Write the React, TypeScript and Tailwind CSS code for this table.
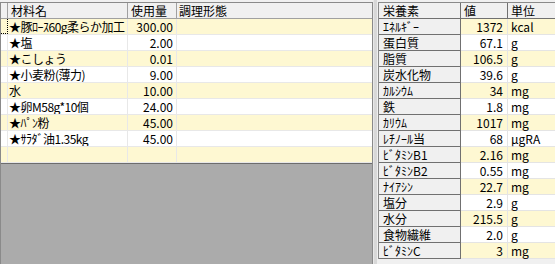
const ingredients = [
  { name: "★豚ﾛｰｽ60g柔らか加工", qty: "300.00" },
  { name: "★塩", qty: "2.00" },
  { name: "★こしょう", qty: "0.01" },
  { name: "★小麦粉(薄力)", qty: "9.00" },
  { name: "水", qty: "10.00" },
  { name: "★卵M58g*10個", qty: "24.00" },
  { name: "★ﾊﾟﾝ粉", qty: "45.00" },
  { name: "★ｻﾗﾀﾞ油1.35kg", qty: "45.00" },
  { name: "", qty: "" },
];

const nutrients = [
  ["ｴﾈﾙｷﾞｰ", "1372", "kcal"],
  ["蛋白質", "67.1", "g"],
  ["脂質", "106.5", "g"],
  ["炭水化物", "39.6", "g"],
  ["ｶﾙｼｳﾑ", "34", "mg"],
  ["鉄", "1.8", "mg"],
  ["ｶﾘｳﾑ", "1017", "mg"],
  ["ﾚﾁﾉｰﾙ当", "68", "μgRA"],
  ["ﾋﾞﾀﾐﾝB1", "2.16", "mg"],
  ["ﾋﾞﾀﾐﾝB2", "0.55", "mg"],
  ["ﾅｲｱｼﾝ", "22.7", "mg"],
  ["塩分", "2.9", "g"],
  ["水分", "215.5", "g"],
  ["食物繊維", "2.0", "g"],
  ["ﾋﾞﾀﾐﾝC", "3", "mg"],
];

export default function App() {
  return (
    <div className="flex w-[555px] h-[264px] overflow-hidden bg-[#f0f0f0] text-[12px] leading-[16px] text-black font-['Noto_Sans_CJK_JP',sans-serif]">
      {/* ingredient grid */}
      <div className="w-[373px] pt-[2px] flex flex-col">
        <div className="flex-1 flex flex-col border-t border-l border-r border-[#8a8a8a] bg-[#ababab]">
          <div className="flex h-[16px] bg-[#f0f0f0] border-b border-[#a0a0a0]">
            <div className="w-[7px] border-r border-[#a0a0a0]" />
            <div className="w-[120px] pl-[3px] border-r border-[#a0a0a0]">材料名</div>
            <div className="w-[49px] pl-[3px] border-r border-[#a0a0a0]">使用量</div>
            <div className="flex-1 pl-[2px]">調理形態</div>
          </div>
          {ingredients.map((r, i) => (
            <div
              key={i}
              className={`flex h-[16px] border-b border-[#e8e8e8] ${i % 2 === 0 ? "bg-[#fef8d2]" : "bg-white"}`}
            >
              <div
                className={`w-[7px] border-r ${i === 0 ? "border-dotted border-black border-b" : "border-[#e8e8e8]"}`}
              />
              <div className="w-[120px] pl-[1px] border-r border-[#e8e8e8] whitespace-nowrap overflow-hidden tracking-[-0.5px]">{r.name}</div>
              <div className="w-[49px] pr-[3px] text-right border-r border-[#e8e8e8]">{r.qty}</div>
              <div className="flex-1" />
            </div>
          ))}
          <div className="flex-1 border-t border-[#6d6d6d]" />
        </div>
      </div>

      <div className="w-[4px] bg-[#d8d8d8] border-l border-[#e8e8e8]" />

      {/* nutrient grid */}
      <div className="flex-1 pt-[2px] pl-[1px]">
        <div className="border-t border-l border-[#8a8a8a] bg-[#f0f0f0]">
          <div className="flex h-[16px] bg-[#f0f0f0] border-b border-[#707070]">
            <div className="w-[82px] pl-[4px] border-r border-[#707070]">栄養素</div>
            <div className="w-[47px] pl-[3px] border-r border-[#707070]">値</div>
            <div className="flex-1 pl-[3px]">単位</div>
          </div>
          {nutrients.map(([n, v, u], i) => (
            <div key={n} className="flex h-[16px]">
              <div className="w-[82px] pl-[4px] bg-[#f0f0f0] border-r border-b border-[#707070] whitespace-nowrap">{n}</div>
              <div className={`flex flex-1 border-b border-[#e4e4e4] ${i % 2 === 0 ? "bg-[#fef8d2]" : "bg-white"}`}>
                <div className="w-[47px] pr-[4px] text-right border-r border-[#e4e4e4]">{v}</div>
                <div className="flex-1 pl-[3px]">{u}</div>
              </div>
            </div>
          ))}
        </div>
      </div>
    </div>
  );
}
